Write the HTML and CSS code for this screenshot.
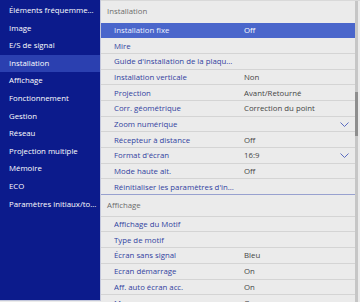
FILE: index.html
```html
<!DOCTYPE html>
<html lang="fr">
<head>
    <meta charset="UTF-8">
    <meta name="viewport" content="width=device-width, initial-scale=1.0">
    <title>Menu de configuration</title>
    <link rel="stylesheet" href="styles.css">
</head>
<body>

    <div class="screen">

        <!-- Main menu -->
        <ul class="sidebar">
            <li class="item">Éléments fréquemment utilisés</li>
            <li class="item">Image</li>
            <li class="item">E/S de signal</li>
            <li class="item active">Installation</li>
            <li class="item">Affichage</li>
            <li class="item">Fonctionnement</li>
            <li class="item">Gestion</li>
            <li class="item">Réseau</li>
            <li class="item">Projection multiple</li>
            <li class="item">Mémoire</li>
            <li class="item">ECO</li>
            <li class="item">Paramètres initiaux/tous les paramètres</li>
        </ul>

        <!-- Sub menu -->
        <div class="panel">
            <div class="list">
                <div class="section-title">Installation</div>
                <div class="row selected"><span class="label">Installation fixe</span><span class="value">Off</span><span class="more"></span></div>
                <div class="row"><span class="label">Mire</span><span class="value"></span><span class="more"></span></div>
                <div class="row"><span class="label">Guide d'installation de la plaque de fixation</span><span class="value"></span><span class="more"></span></div>
                <div class="row"><span class="label">Installation verticale</span><span class="value">Non</span><span class="more"></span></div>
                <div class="row"><span class="label">Projection</span><span class="value">Avant/Retourné</span><span class="more"></span></div>
                <div class="row"><span class="label">Corr. géométrique</span><span class="value">Correction du point</span><span class="more"></span></div>
                <div class="row"><span class="label">Zoom numérique</span><span class="value"></span>
                    <span class="more"><svg width="9" height="5" viewBox="0 0 9 5"><polyline points="0.5,0.5 4.5,4.5 8.5,0.5" fill="none" stroke="#5a6bc0" stroke-width="1"/></svg></span></div>
                <div class="row"><span class="label">Récepteur à distance</span><span class="value">Off</span><span class="more"></span></div>
                <div class="row"><span class="label">Format d'écran</span><span class="value">16:9</span>
                    <span class="more"><svg width="9" height="5" viewBox="0 0 9 5"><polyline points="0.5,0.5 4.5,4.5 8.5,0.5" fill="none" stroke="#5a6bc0" stroke-width="1"/></svg></span></div>
                <div class="row"><span class="label">Mode haute alt.</span><span class="value">Off</span><span class="more"></span></div>
                <div class="row end"><span class="label">Réinitialiser les paramètres d'installation</span><span class="value"></span><span class="more"></span></div>

                <div class="section-title">Affichage</div>
                <div class="row"><span class="label">Affichage du Motif</span><span class="value"></span><span class="more"></span></div>
                <div class="row"><span class="label">Type de motif</span><span class="value"></span><span class="more"></span></div>
                <div class="row"><span class="label">Écran sans signal</span><span class="value">Bleu</span><span class="more"></span></div>
                <div class="row"><span class="label">Ecran démarrage</span><span class="value">On</span><span class="more"></span></div>
                <div class="row"><span class="label">Aff. auto écran acc.</span><span class="value">On</span><span class="more"></span></div>
                <div class="row"><span class="label">Messages</span><span class="value">On</span><span class="more"></span></div>
            </div>

            <!-- Scroll bar -->
            <div class="scrollbar">
                <div class="thumb"></div>
            </div>
        </div>

    </div>

</body>
</html>
```

FILE: styles.css
```css
/* Page */
body {
    margin: 0;
    width: 360px;
    height: 302px;
    overflow: hidden;
    font-family: "Open Sans", "Noto Sans", sans-serif;
    font-size: 7.8px;
    background: #ebebeb;
}

.screen {
    display: flex;
    height: 302px;
}

/* Main menu */
.sidebar {
    list-style: none;
    margin: 0;
    padding: 2px 0 0 0;
    width: 100px;
    height: 298px;
    background: #0c1b8c;
    border-right: 1px solid #c3c7dc;
    border-bottom: 1px solid #c3c7dc;
    flex-shrink: 0;
}

.sidebar .item {
    height: 17.6px;
    line-height: 17.6px;
    padding: 0 3px 0 9px;
    color: #ffffff;
    white-space: nowrap;
    overflow: hidden;
    text-overflow: ellipsis;
}

.sidebar .item.active {
    background: #2b40b0;
}

/* Sub menu */
.panel {
    flex: 1;
    display: flex;
    overflow: hidden;
    border-top: 1px solid #d9d9d9;
}

.list {
    flex: 1;
    min-width: 0;
}

.section-title {
    height: 21.6px;
    line-height: 21px;
    padding-left: 6px;
    color: #6b6b6b;
    box-sizing: border-box;
    border-bottom: 1px solid #d4d4d4;
}

.section-title:first-child {
    border-bottom: none;
}

.row {
    display: grid;
    grid-template-columns: 122px 1fr 15px;
    column-gap: 8px;
    align-items: center;
    height: 15.7px;
    box-sizing: border-box;
    padding-left: 13px;
    border-bottom: 1px solid #d4d4d4;
    color: #31429f;
}

.row .label {
    white-space: nowrap;
    overflow: hidden;
    text-overflow: ellipsis;
}

.row .value {
    color: #454545;
    white-space: nowrap;
}

.row .more {
    display: flex;
    align-items: center;
}

.row.selected {
    background: #4a66cb;
    color: #eef1ff;
    border-bottom-color: #4a66cb;
}

.row.selected .value {
    color: #ffffff;
}

.row.end {
    border-bottom-color: #98a1cf;
}

/* Scroll bar */
.scrollbar {
    width: 3px;
    margin-right: 2px;
    background: #c6c6c6;
}

.thumb {
    margin-top: 91px;
    height: 44px;
    background: #8e8e8e;
}
```
